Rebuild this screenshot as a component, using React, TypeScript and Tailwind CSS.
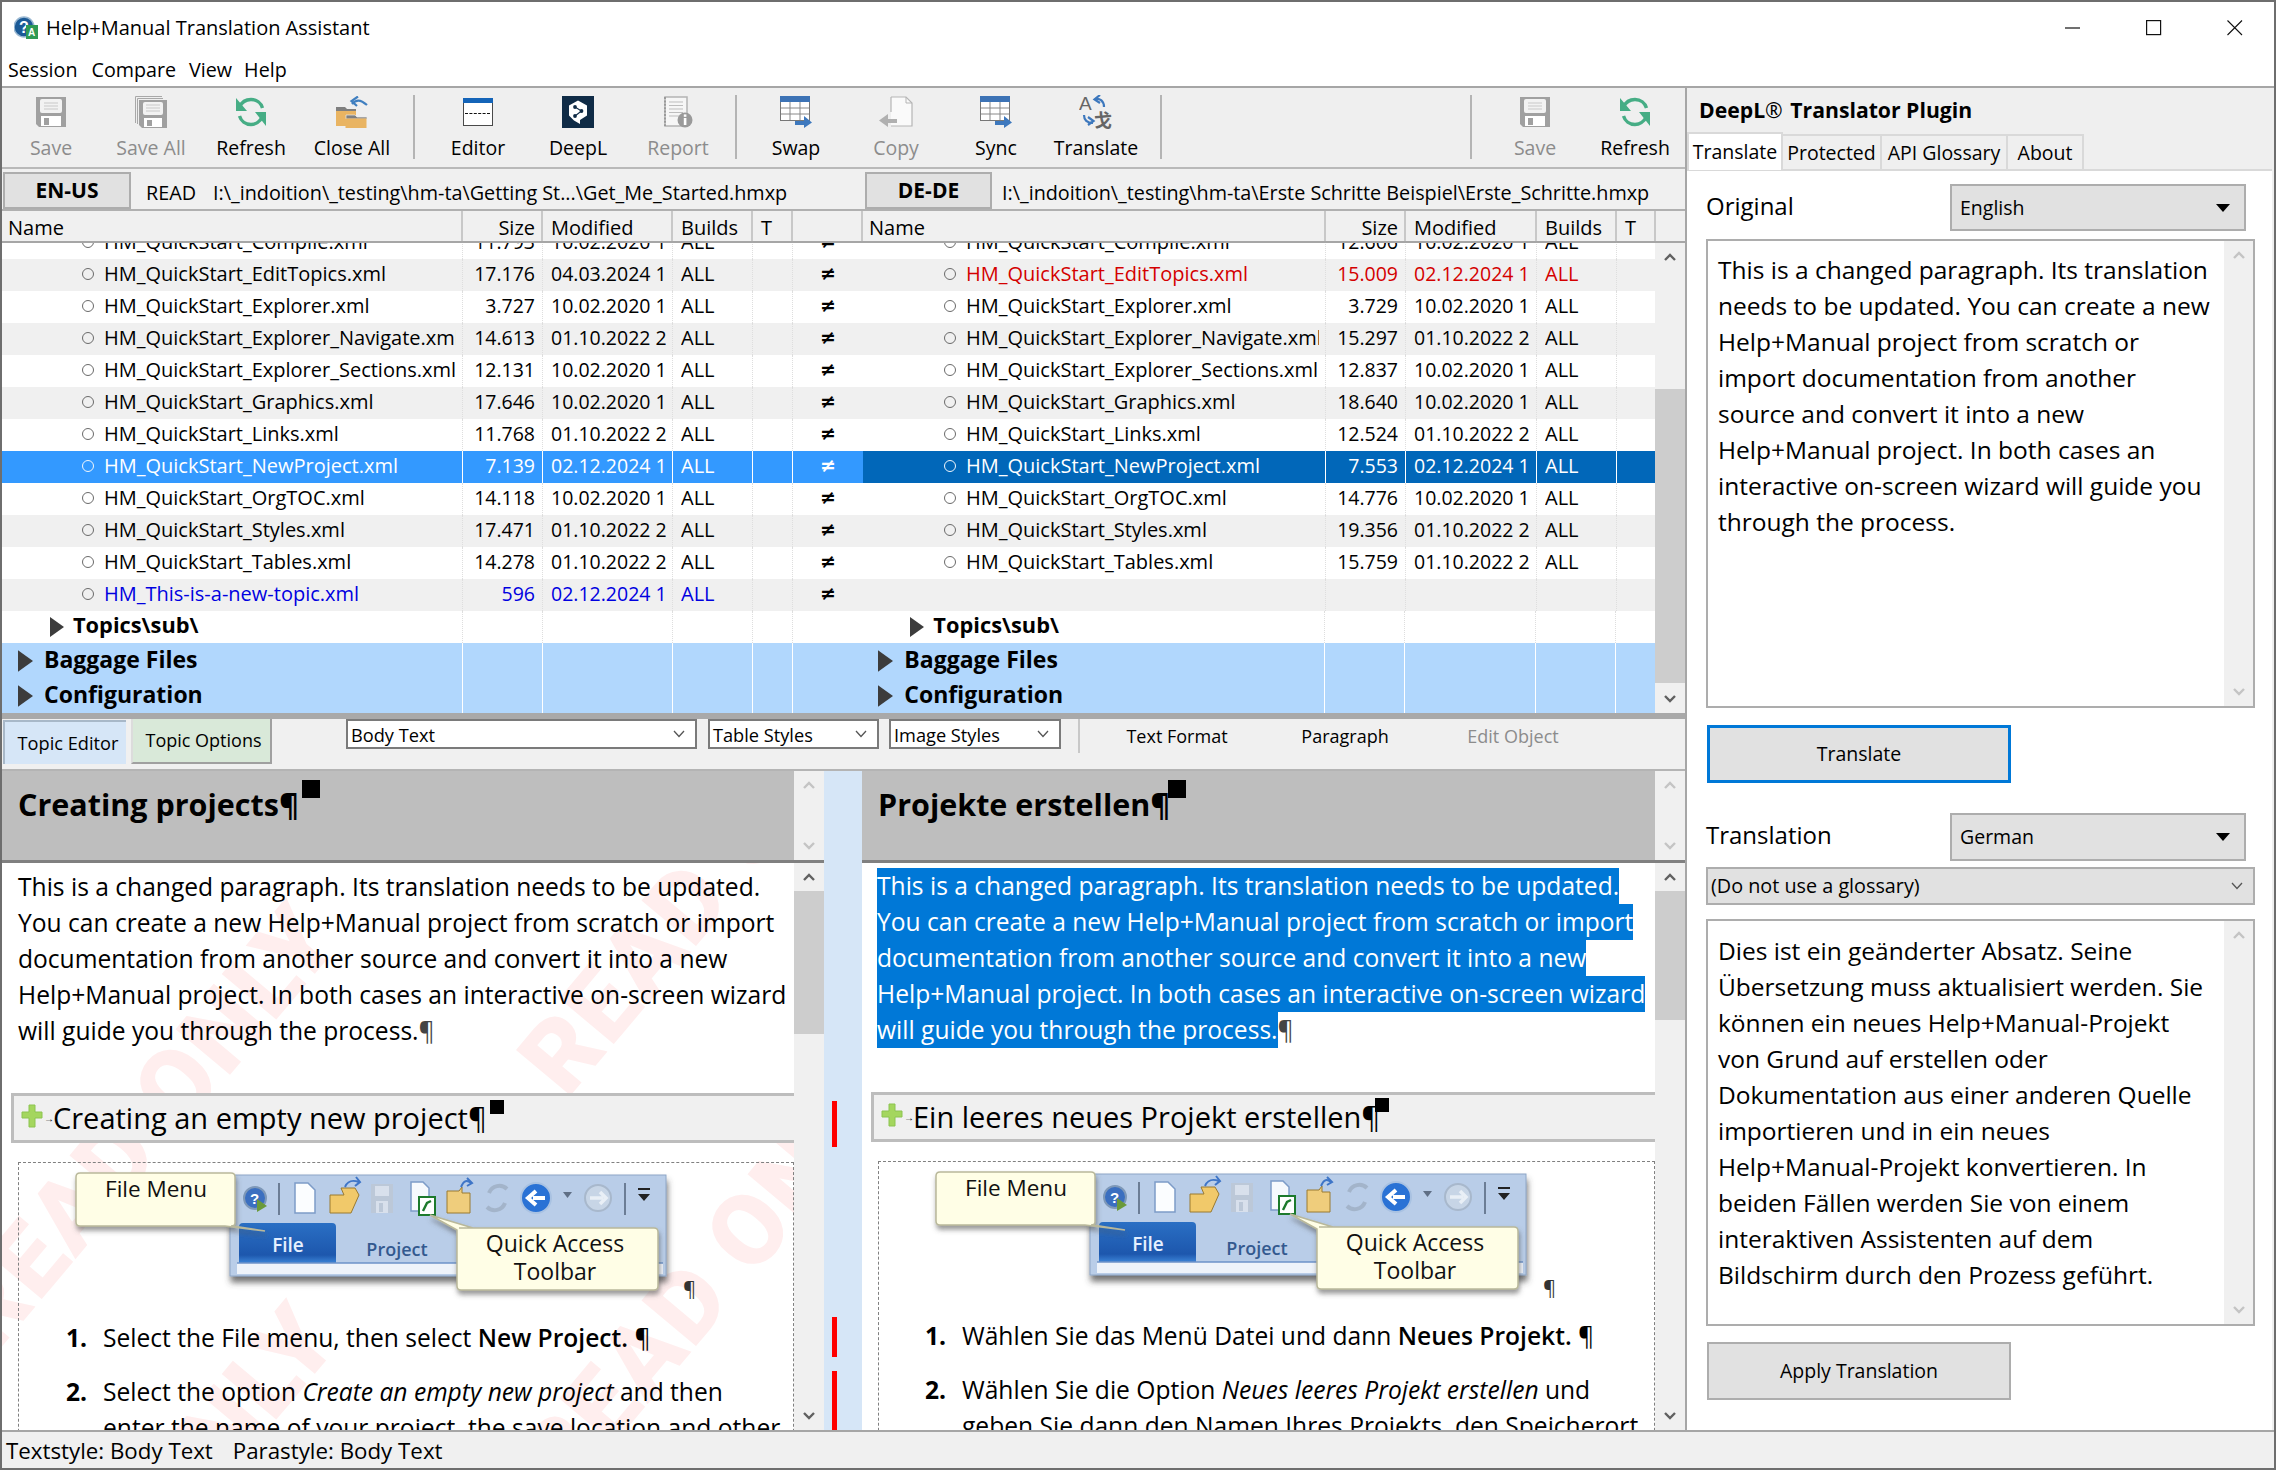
import React from "react";

const Chevron = ({ up, light }: { up?: boolean; light?: boolean }) => (
  <svg width="14" height="10" viewBox="0 0 14 10" fill="none">
    <path d={up ? "M2 8L7 3L12 8" : "M2 2L7 7L12 2"} stroke={light ? "#c4c4c4" : "#606060"} strokeWidth="2.4" />
  </svg>
);

const VScroll = ({ w, thumbTop, thumbH, light }: { w: string; thumbTop?: string; thumbH?: string; light?: boolean }) => (
  <div className={`${w} shrink-0 flex flex-col bg-[#f0f0f0]`}>
    <div className="h-[28px] shrink-0 flex items-center justify-center"><Chevron up light={light} /></div>
    <div className="flex-1 min-h-0 flex flex-col">
      {thumbTop && <div className={thumbTop} />}
      {thumbH && <div className={`${thumbH} bg-[#cdcdcd] shrink-0`} />}
    </div>
    <div className="h-[28px] shrink-0 flex items-center justify-center"><Chevron light={light} /></div>
  </div>
);

const SaveIcon = () => (
  <svg width="30" height="30" viewBox="0 0 30 30">
    <path d="M0 0H30V30H3L0 27Z" fill="#a0a0a0" />
    <rect x="4" y="2" width="22" height="14" rx="2" fill="#f2f2f2" />
    <path d="M8 6H22M8 9H22M8 12H22" stroke="#c8c8c8" />
    <rect x="5" y="19" width="20" height="10" fill="#fff" />
    <rect x="8" y="21" width="5" height="7" fill="#a0a0a0" />
  </svg>
);
const SaveAllIcon = () => (
  <svg width="32" height="32" viewBox="0 0 32 32">
    <path d="M.5 27V.5H27M2.5 28V2.5H28" stroke="#a8a8a8" fill="none" />
    <path d="M4 4H32V32H7L4 29Z" fill="#a0a0a0" />
    <rect x="8" y="6" width="20" height="13" rx="2" fill="#f2f2f2" />
    <path d="M11 9H25M11 12H25M11 15H25" stroke="#c8c8c8" />
    <rect x="9" y="22" width="18" height="9" fill="#fff" />
    <rect x="12" y="24" width="5" height="6" fill="#a0a0a0" />
  </svg>
);
const RefreshIcon = () => (
  <svg width="32" height="30" viewBox="0 0 32 30" fill="none">
    <path d="M4.5 10C7 4.5 12 2.5 16 2.5C21.5 2.5 26 6 27.5 11" stroke="#46ad85" strokeWidth="3.4" />
    <path d="M27.5 19.5C25 25 20 27.5 16 27.5C10.5 27.5 6 24 4.5 19" stroke="#46ad85" strokeWidth="3.4" />
    <path d="M1 1V14H12Z M31 29V15H20Z" fill="#46ad85" />
  </svg>
);
const CloseAllIcon = () => (
  <svg width="32" height="32" viewBox="0 0 32 32" fill="none">
    <path d="M16 8C20 3.5 24 3 31 9" stroke="#3f7fc0" strokeWidth="2.2" />
    <path d="M22 0.5L15.5 5L21 10" stroke="#3f7fc0" strokeWidth="2.2" />
    <path d="M0 11H9L11 13H20V15H0Z" fill="#7f7f7f" />
    <rect x="0" y="15" width="20" height="15" fill="#e9b462" />
    <path d="M10 19H19L21 21H31V23H10Z" fill="#7f7f7f" stroke="#efefef" strokeWidth=".7" />
    <rect x="10" y="23" width="20" height="9" fill="#e9b462" stroke="#e9b462" />
  </svg>
);
const EditorIcon = () => (
  <svg width="30" height="28" viewBox="0 0 30 28">
    <rect x=".5" y=".5" width="29" height="27" fill="#fff" stroke="#4a4a4a" />
    <rect x="0" y="0" width="30" height="5" fill="#1464b8" />
    <path d="M2 15.5H28" stroke="#111" strokeDasharray="3 1.4" />
  </svg>
);
const DeepLIcon = () => (
  <svg width="32" height="32" viewBox="0 0 32 32">
    <rect width="32" height="32" fill="#0f2b46" />
    <path d="M16 4.5L25 9.5V19.5L18 24V28L12 24.5L7 19.5V9.5Z" fill="#fff" />
    <circle cx="13" cy="11" r="1.9" fill="#0f2b46" />
    <circle cx="19.5" cy="15" r="1.9" fill="#0f2b46" />
    <circle cx="13" cy="20" r="1.9" fill="#0f2b46" />
    <path d="M13 11L19.5 15L13 20" stroke="#0f2b46" strokeWidth="1.1" fill="none" />
  </svg>
);
const ReportIcon = () => (
  <svg width="30" height="32" viewBox="0 0 30 32" fill="none">
    <path d="M2 1H24V30H2Z" fill="#f6f6f6" stroke="#b4b4b4" strokeWidth="1.5" />
    <path d="M6 6H20M6 9.5H20M6 13H20M6 16.5H20M6 20H16" stroke="#bdbdbd" />
    <path d="M2 1V30" stroke="#9a9a9a" strokeWidth="2" strokeDasharray="2 1.4" />
    <circle cx="22" cy="24" r="7.5" fill="#9a9a9a" />
    <rect x="20.8" y="22" width="2.6" height="7" fill="#fff" />
    <rect x="20.8" y="18.4" width="2.6" height="2.4" fill="#fff" />
  </svg>
);
const TableIcon = () => (
  <svg width="32" height="32" viewBox="0 0 32 32" fill="none">
    <rect x=".5" y=".5" width="29" height="24" fill="#fff" stroke="#777" />
    <rect x="0" y="0" width="30" height="6" fill="#3d73b5" />
    <path d="M10 6V24M20 6V24M1 12H29M1 18H29" stroke="#888" />
    <path d="M15 25H24V20L32 26.5L24 32V29H15Z" fill="#3d78bd" />
  </svg>
);
const CopyIcon = () => (
  <svg width="34" height="32" viewBox="0 0 34 32" fill="none">
    <path d="M12 1H27L33 7V30H12" fill="#fafafa" stroke="#b5b5b5" strokeWidth="1.2" />
    <path d="M12 1V16" stroke="#b5b5b5" strokeWidth="1.2" />
    <path d="M27 1V7H33" stroke="#b5b5b5" />
    <path d="M18 23H9V18L0 24.5L9 31V27H18Z" fill="#b0b0b0" />
  </svg>
);
const TranslateIcon = () => (
  <svg width="34" height="34" viewBox="0 0 34 34" fill="none">
    <text x="0" y="15" fontFamily="'Liberation Sans',sans-serif" fontSize="19" fill="#666">A</text>
    <text x="15" y="32" fontFamily="'Noto Sans CJK SC',sans-serif" fontWeight="700" fontSize="18" fill="#666">戈</text>
    <path d="M16 4C21 3 25 6 25 12" stroke="#3d78bd" strokeWidth="2.2" />
    <path d="M21 0L15.5 4.4L21 8" stroke="#3d78bd" strokeWidth="2.2" />
    <path d="M14 28C8 28 5 25 5 20" stroke="#3d78bd" strokeWidth="2.2" />
    <path d="M9 30L14.5 26L9 22" stroke="#3d78bd" strokeWidth="2.2" />
  </svg>
);

const AppIcon = () => (
  <svg width="26" height="26" viewBox="0 0 26 26">
    <circle cx="10" cy="12" r="10" fill="#1c5a96" stroke="#9ab8d2" strokeWidth="1.5" />
    <text x="5" y="18" fontFamily="'Liberation Sans',sans-serif" fontWeight="700" fontSize="16" fill="#fff">?</text>
    <rect x="12" y="10" width="12" height="14" fill="#2f9a54" />
    <text x="14" y="21" fontFamily="'Liberation Sans',sans-serif" fontWeight="700" fontSize="10" fill="#fff">A</text>
  </svg>
);

const ToolBtn = ({ icon, label, off, w = "w-[100px]" }: { icon: React.ReactNode; label: string; off?: boolean; w?: string }) => (
  <div className={`${w} shrink-0 flex flex-col items-center`}>
    <div className="h-[33px] flex items-center justify-center">{icon}</div>
    <div className={`mt-[7px] text-[19.5px] leading-[26px] ${off ? "text-[#8c8c8c]" : "text-black"}`}>{label}</div>
  </div>
);
const Sep = ({ cls }: { cls: string }) => <div className={`w-[2px] h-[64px] bg-[#b4b4b4] shrink-0 ${cls}`} />;

type Row = { n: string; s: string; m: string; rn?: string; rs?: string; rm?: string; kind?: string };
const rows: Row[] = [
  { n: "HM_QuickStart_Compile.xml", s: "11.793", m: "10.02.2020 1", rn: "HM_QuickStart_Compile.xml", rs: "12.606", rm: "10.02.2020 1" },
  { n: "HM_QuickStart_EditTopics.xml", s: "17.176", m: "04.03.2024 1", rn: "HM_QuickStart_EditTopics.xml", rs: "15.009", rm: "02.12.2024 1", kind: "red" },
  { n: "HM_QuickStart_Explorer.xml", s: "3.727", m: "10.02.2020 1", rn: "HM_QuickStart_Explorer.xml", rs: "3.729", rm: "10.02.2020 1" },
  { n: "HM_QuickStart_Explorer_Navigate.xml", s: "14.613", m: "01.10.2022 2", rn: "HM_QuickStart_Explorer_Navigate.xml", rs: "15.297", rm: "01.10.2022 2" },
  { n: "HM_QuickStart_Explorer_Sections.xml", s: "12.131", m: "10.02.2020 1", rn: "HM_QuickStart_Explorer_Sections.xml", rs: "12.837", rm: "10.02.2020 1" },
  { n: "HM_QuickStart_Graphics.xml", s: "17.646", m: "10.02.2020 1", rn: "HM_QuickStart_Graphics.xml", rs: "18.640", rm: "10.02.2020 1" },
  { n: "HM_QuickStart_Links.xml", s: "11.768", m: "01.10.2022 2", rn: "HM_QuickStart_Links.xml", rs: "12.524", rm: "01.10.2022 2" },
  { n: "HM_QuickStart_NewProject.xml", s: "7.139", m: "02.12.2024 1", rn: "HM_QuickStart_NewProject.xml", rs: "7.553", rm: "02.12.2024 1", kind: "sel" },
  { n: "HM_QuickStart_OrgTOC.xml", s: "14.118", m: "10.02.2020 1", rn: "HM_QuickStart_OrgTOC.xml", rs: "14.776", rm: "10.02.2020 1" },
  { n: "HM_QuickStart_Styles.xml", s: "17.471", m: "01.10.2022 2", rn: "HM_QuickStart_Styles.xml", rs: "19.356", rm: "01.10.2022 2" },
  { n: "HM_QuickStart_Tables.xml", s: "14.278", m: "01.10.2022 2", rn: "HM_QuickStart_Tables.xml", rs: "15.759", rm: "01.10.2022 2" },
  { n: "HM_This-is-a-new-topic.xml", s: "596", m: "02.12.2024 1", kind: "new" },
];

const Cell = ({ w, line, right, pad = "pl-[8px] pr-[8px]", children }: { w: string; line: string; right?: boolean; pad?: string; children?: React.ReactNode }) => (
  <div className={`${w} shrink-0 h-full border-r ${line} ${pad} ${right ? "text-right" : ""}`}>
    <div className="overflow-hidden whitespace-nowrap h-full">{children}</div>
  </div>
);

const Circle = ({ sel }: { sel?: boolean }) => (
  <span className={`inline-block w-[12px] h-[12px] rounded-full border-[1.5px] shrink-0 ${sel ? "border-[#f0f6fc]" : "border-[#6a6a6a]"}`} />
);
const Arrow = ({ big }: { big?: boolean }) => (
  <svg width={big ? 15 : 14} height={big ? 22 : 20} viewBox="0 0 14 20" className="shrink-0 mt-[3px]"><path d="M0 0L14 10L0 20Z" fill="#3c3c3c" /></svg>
);

const FileRow = ({ r, i }: { r: Row; i: number }) => {
  const grey = i % 2 === 1;
  const sel = r.kind === "sel";
  const base = sel ? "" : grey ? "bg-[#f0f0f0]" : "bg-white";
  const line = sel ? "border-white" : "border-dotted border-[#dedede]";
  const lTxt = sel ? "text-white bg-[#3399ff]" : r.kind === "new" ? "text-[#0000e0]" : "text-black";
  const rTxt = sel ? "text-white bg-[#0167b9]" : r.kind === "red" ? "text-[#d40000]" : "text-black";
  return (
    <div className={`flex h-[32px] leading-[29px] text-[20px] shrink-0 ${base}`}>
      <div className={`flex ${lTxt}`}>
        <Cell w="w-[461px]" line={line} pad="pl-[80px] pr-[6px]">
          <div className="flex items-center gap-[10px] h-[29px]"><Circle sel={sel} /><span>{r.n}</span></div>
        </Cell>
        <Cell w="w-[80px]" line={line} right pad="pl-[6px] pr-[7px]"><span className="text-[19.5px]">{r.s}</span></Cell>
        <Cell w="w-[130px]" line={line} pad="pl-[8px] pr-[6px]"><span className="text-[19.5px]">{r.m}</span></Cell>
        <Cell w="w-[80px]" line={line}>ALL</Cell>
        <Cell w="w-[40px]" line={line} />
        <div className={`w-[70px] text-center font-['DejaVu_Sans',sans-serif] font-bold text-[19px] ${sel ? "text-white" : "text-black"}`}>≠</div>
      </div>
      <div className={`flex ${rTxt}`}>
        <Cell w="w-[463px]" line={line} pad="pl-[81px] pr-[6px]">
          {r.rn && <div className="flex items-center gap-[10px] h-[29px]"><Circle sel={sel} /><span>{r.rn}</span></div>}
        </Cell>
        <Cell w="w-[80px]" line={line} right pad="pl-[6px] pr-[7px]"><span className="text-[19.5px]">{r.rs}</span></Cell>
        <Cell w="w-[131px]" line={line} pad="pl-[8px] pr-[7px]"><span className="text-[19.5px]">{r.rm}</span></Cell>
        <Cell w="w-[80px]" line={line}>{r.rn ? "ALL" : ""}</Cell>
        <div className="w-[39px]" />
      </div>
    </div>
  );
};

const GroupRow = ({ label, h, blue }: { label: string; h: string; blue?: boolean }) => {
  const line = blue ? "border-white" : "border-dotted border-[#dedede]";
  const ind = blue ? "pl-[16px]" : "pl-[48px]";
  const gap = blue ? "gap-[11px]" : "gap-[9px]";
  const size = blue ? "text-[23px]" : "text-[21.8px]";
  const Name = () => (
    <div className={`flex items-center ${gap} h-[calc(100%-3px)]`}><Arrow big={blue} /><span>{label}</span></div>
  );
  return (
    <div className={`flex ${h} shrink-0 font-bold ${size} ${blue ? "bg-[#b1d7fd]" : "bg-white"}`}>
      <Cell w="w-[461px]" line={line} pad={`${ind} pr-0`}><Name /></Cell>
      <Cell w="w-[80px]" line={line} /><Cell w="w-[130px]" line={line} /><Cell w="w-[80px]" line={line} /><Cell w="w-[40px]" line={line} />
      <div className="w-[70px]" />
      <Cell w="w-[463px]" line={line} pad={`${ind} pr-0`}><Name /></Cell>
      <Cell w="w-[80px]" line={line} /><Cell w="w-[131px]" line={line} /><Cell w="w-[80px]" line={line} />
      <div className="w-[39px]" />
    </div>
  );
};

const Head = ({ w, children, right, pad = "px-[8px]" }: { w: string; children?: React.ReactNode; right?: boolean; pad?: string }) => (
  <div className={`${w} shrink-0 border-r-2 border-[#c8c8c8] pt-[4px] leading-[26px] ${pad} ${right ? "text-right" : ""}`}>{children}</div>
);

const Picture = ({ id }: { id: string }) => (
  <svg width="640" height="145" viewBox="0 0 640 145" className="block">
    <defs>
      <filter id={`sh${id}`} x="-5%" y="-10%" width="110%" height="130%"><feDropShadow dx="1" dy="6" stdDeviation="3" floodColor="#444" floodOpacity=".75" /></filter>
      <filter id={`sk${id}`} x="-10%" y="-10%" width="120%" height="135%"><feDropShadow dx="1" dy="4" stdDeviation="2.5" floodColor="#555" floodOpacity=".6" /></filter>
      <linearGradient id={`ft${id}`} x1="0" y1="0" x2="0" y2="1"><stop offset="0" stopColor="#2a6fc4" /><stop offset=".8" stopColor="#1d57ad" /><stop offset="1" stopColor="#3b83d6" /></linearGradient>
    </defs>
    <rect x="165" y="10" width="436" height="101" fill="#b9cde8" stroke="#8ea6c6" filter={`url(#sh${id})`} />
    <rect x="172" y="98" width="426" height="11" fill="#eef3fa" />
    <path d="M174 98V62Q174 58 178 58H267Q271 58 271 62V98Z" fill={`url(#ft${id})`} />
    <path d="M172 98H598" stroke="#6d92c8" strokeWidth="1.5" />
    <text x="223" y="87" textAnchor="middle" fontFamily="'Open Sans',sans-serif" fontSize="19" fontWeight="600" fill="#e6f0ff">File</text>
    <text x="332" y="91" textAnchor="middle" fontFamily="'Open Sans',sans-serif" fontSize="18" fontWeight="600" fill="#33598f">Project</text>
    <circle cx="190" cy="33" r="11" fill="#3b6fc0" stroke="#7e98b8" strokeWidth="2" />
    <text x="185" y="39" fontFamily="'Liberation Sans',sans-serif" fontWeight="700" fontSize="15" fill="#fff">?</text>
    <path d="M192 34L202 41L192 47Z" fill="#6a9a3a" />
    <path d="M214 18V50M560 18V50" stroke="#596a80" strokeWidth="1.6" />
    <path d="M230 18H243L250 25V48H230Z" fill="#fbfdff" stroke="#7d9cc8" strokeWidth="1.5" />
    <path d="M265 30H279L276 23H290L294 30L286 48H265Z" fill="#f1c96a" stroke="#9a7a30" />
    <path d="M280 22C283 15 288 15 294 17M291 12L295 17L290 21" stroke="#3e75c7" strokeWidth="2" fill="none" />
    <path d="M306 19H328V48H306Z" fill="#bcc8d8" />
    <rect x="310" y="21" width="14" height="10" fill="#d8e0ec" /><rect x="311" y="36" width="12" height="12" fill="#d8e0ec" /><rect x="314" y="38" width="4" height="9" fill="#bcc8d8" />
    <path d="M346 17H358L364 23V46H346Z" fill="#f6f9fd" stroke="#7d9cc8" strokeWidth="1.5" />
    <rect x="354" y="32" width="16" height="18" fill="#fff" stroke="#1d7a2c" strokeWidth="2" />
    <path d="M358 46L362 38L366 36" stroke="#1d7a2c" strokeWidth="2.4" fill="none" />
    <path d="M382 26H394L397 22V28H405V48H382Z" fill="#efcd7c" stroke="#9a7a30" />
    <path d="M396 22C399 15 402 15 406 18M402 13L407 18L402 21" stroke="#3e75c7" strokeWidth="2" fill="none" />
    <path d="M424 28A11 11 0 0 1 442 24M440 38A11 11 0 0 1 422 42" stroke="#a3b4ca" strokeWidth="4" fill="none" />
    <circle cx="471" cy="33" r="15" fill="#2a72d5" stroke="#a9c2e2" strokeWidth="2" />
    <path d="M480 33H468M471 26L463 33L471 40" stroke="#fff" strokeWidth="4" fill="none" />
    <path d="M498 27H507L502.5 33Z" fill="#5f6f85" />
    <circle cx="533" cy="33" r="13" fill="#c7d5e6" stroke="#a8b8cc" strokeWidth="2" />
    <path d="M525 33H538M535 27L541 33L535 39" stroke="#e9eff6" strokeWidth="3.5" fill="none" />
    <path d="M573 23H585V25H573ZM573 29H585L579 36Z" fill="#222" />
    <path d="M11 12Q11 8 15 8H166Q170 8 170 12V58Q170 61 166 61H168L200 66L160 61H15Q11 61 11 57Z" fill="#fffee6" stroke="#b9b89a" strokeWidth="1.5" filter={`url(#sk${id})`} />
    <text x="91" y="32" textAnchor="middle" fontFamily="'Open Sans',sans-serif" fontSize="22.5" fill="#111">File Menu</text>
    <path d="M394 63H408L365 50L392 65V121Q392 125 396 125H589Q593 125 593 121V67Q593 63 589 63Z" fill="#fffee6" stroke="#b9b89a" strokeWidth="1.5" filter={`url(#sk${id})`} />
    <text x="490" y="87" textAnchor="middle" fontFamily="'Open Sans',sans-serif" fontSize="23" fill="#111">Quick Access</text>
    <text x="490" y="115" textAnchor="middle" fontFamily="'Open Sans',sans-serif" fontSize="23" fill="#111">Toolbar</text>
    <text x="618" y="131" fontFamily="'Open Sans',sans-serif" fontSize="20" fill="#333">¶</text>
  </svg>
);

const Plus = () => (
  <svg width="22" height="24" viewBox="0 0 22 24" className="shrink-0 -mt-[4px]">
    <path d="M8 1H14V8H21V14H14V23H8V14H1V8H8Z" fill="#a4d65e" stroke="#8cc450" />
  </svg>
);

const Tag = ({ cls }: { cls: string }) => <span className={`absolute bg-black ${cls}`} />;

const WM = ({ cls }: { cls: string }) => (
  <div className={`absolute font-['Roboto',sans-serif] font-black text-[100px] leading-none text-[#ffeeee] -rotate-[50deg] whitespace-nowrap tracking-[2px] origin-left ${cls}`}>READ ONLY</div>
);

const leftBody = [
  "This is a changed paragraph. Its translation needs to be updated.",
  "You can create a new Help+Manual project from scratch or import",
  "documentation from another source and convert it into a new",
  "Help+Manual project. In both cases an interactive on-screen wizard",
  "will guide you through the process.",
];

const origLines = [
  "This is a changed paragraph. Its translation",
  "needs to be updated. You can create a new",
  "Help+Manual project from scratch or",
  "import documentation from another",
  "source and convert it into a new",
  "Help+Manual project. In both cases an",
  "interactive on-screen wizard will guide you",
  "through the process.",
];
const transLines = [
  "Dies ist ein geänderter Absatz. Seine",
  "Übersetzung muss aktualisiert werden. Sie",
  "können ein neues Help+Manual-Projekt",
  "von Grund auf erstellen oder",
  "Dokumentation aus einer anderen Quelle",
  "importieren und in ein neues",
  "Help+Manual-Projekt konvertieren. In",
  "beiden Fällen werden Sie von einem",
  "interaktiven Assistenten auf dem",
  "Bildschirm durch den Prozess geführt.",
];

const Combo = ({ label, w }: { label: string; w: string }) => (
  <div className={`${w} h-[30px] shrink-0 bg-white border-2 border-[#7a7a7a] flex items-center justify-between pl-[3px] pr-[10px]`}>
    <span className="text-[18.2px] leading-none pt-[3px]">{label}</span>
    <svg width="12" height="8" viewBox="0 0 12 8" fill="none"><path d="M1 1L6 6.5L11 1" stroke="#555" strokeWidth="1.3" /></svg>
  </div>
);
const DarkArrow = () => (
  <svg width="14" height="8" viewBox="0 0 14 8"><path d="M0 0H14L7 8Z" fill="#000" /></svg>
);

export default function App() {
  return (
    <div className="w-[2276px] h-[1470px] overflow-hidden flex flex-col bg-white text-black border-t-2 border-l-2 border-r-2 border-b-2 border-[#6e6e6e] font-['Open_Sans',sans-serif]">
      {/* title */}
      <div className="h-[52px] shrink-0 flex items-center pl-[12px]">
        <AppIcon />
        <span className="ml-[6px] text-[20px] leading-none">Help+Manual Translation Assistant</span>
        <div className="ml-auto flex items-center">
          <svg width="16" height="16" className="mr-[65px]"><path d="M0 8H15" stroke="#111" strokeWidth="1.2" /></svg>
          <svg width="16" height="16" className="mr-[65px]"><rect x=".6" y=".6" width="14" height="14" fill="none" stroke="#111" strokeWidth="1.2" /></svg>
          <svg width="16" height="16" className="mr-[31px]"><path d="M.5 .5L15 15M15 .5L.5 15" stroke="#111" strokeWidth="1.1" /></svg>
        </div>
      </div>
      {/* menu */}
      <div className="h-[32px] shrink-0 flex items-center text-[19.7px] pl-[6px] leading-none">
        <span>Session</span><span className="ml-[14px]">Compare</span><span className="ml-[13px]">View</span><span className="ml-[12px]">Help</span>
      </div>
      <div className="h-[2px] shrink-0 bg-[#a6a6a6]" />

      <div className="flex flex-1 min-h-0">
        {/* left main */}
        <div className="w-[1683px] shrink-0 flex flex-col min-h-0">
          {/* toolbar */}
          <div className="h-[81px] shrink-0 bg-[#efefef] flex pt-[7px] border-b-2 border-[#b9b9b9]">
            <div className="w-[1px] shrink-0 -ml-[2px]" />
            <ToolBtn icon={<SaveIcon />} label="Save" off />
            <ToolBtn icon={<SaveAllIcon />} label="Save All" off />
            <ToolBtn icon={<RefreshIcon />} label="Refresh" />
            <ToolBtn icon={<CloseAllIcon />} label="Close All" w="w-[102px]" />
            <Sep cls="ml-[10px] mr-[13px]" />
            <ToolBtn icon={<EditorIcon />} label="Editor" />
            <ToolBtn icon={<DeepLIcon />} label="DeepL" />
            <ToolBtn icon={<ReportIcon />} label="Report" off />
            <Sep cls="ml-[7px] mr-[9px]" />
            <ToolBtn icon={<TableIcon />} label="Swap" />
            <ToolBtn icon={<CopyIcon />} label="Copy" off />
            <ToolBtn icon={<TableIcon />} label="Sync" />
            <ToolBtn icon={<TranslateIcon />} label="Translate" />
            <Sep cls="ml-[14px]" />
            <div className="flex-1" />
            <Sep cls="mr-[13px]" />
            <ToolBtn icon={<SaveIcon />} label="Save" off />
            <ToolBtn icon={<RefreshIcon />} label="Refresh" />
          </div>
          {/* lang row */}
          <div className="h-[42px] shrink-0 bg-[#f0f0f0] flex items-start text-[19.8px] border-b-2 border-[#b0b0b0]">
            <div className="w-[860px] shrink-0 flex items-start">
              <div className="ml-[1px] mt-[3px] w-[128px] h-[37px] bg-[#e1e1e1] border-2 border-[#adadad] flex items-center justify-center font-bold text-[21px]">EN-US</div>
              <span className="ml-[15px] mt-[8px] leading-[32px]">READ</span>
              <span className="ml-[17px] mt-[8px] leading-[32px] whitespace-nowrap">I:\_indoition\_testing\hm-ta\Getting St...\Get_Me_Started.hmxp</span>
            </div>
            <div className="ml-[3px] mt-[3px] w-[127px] h-[37px] bg-[#e1e1e1] border-2 border-[#adadad] flex items-center justify-center font-bold text-[21px]">DE-DE</div>
            <span className="ml-[10px] mt-[8px] leading-[32px] whitespace-nowrap">I:\_indoition\_testing\hm-ta\Erste Schritte Beispiel\Erste_Schritte.hmxp</span>
          </div>
          {/* header */}
          <div className="h-[32px] shrink-0 flex bg-[#f0f0f0] text-[20px] border-b-2 border-[#a6a6a6]">
            <Head w="w-[461px]" pad="px-[6px]">Name</Head>
            <Head w="w-[80px]" right pad="px-[6px]">Size</Head>
            <Head w="w-[130px]">Modified</Head>
            <Head w="w-[80px]">Builds</Head>
            <Head w="w-[40px]">T</Head>
            <Head w="w-[70px]" />
            <Head w="w-[463px]" pad="px-[6px]">Name</Head>
            <Head w="w-[80px]" right pad="px-[6px]">Size</Head>
            <Head w="w-[131px]">Modified</Head>
            <Head w="w-[80px]">Builds</Head>
            <Head w="w-[39px]">T</Head>
          </div>
          {/* list */}
          <div className="h-[470px] shrink-0 flex overflow-hidden">
            <div className="w-[1653px] shrink-0 flex flex-col overflow-hidden">
              <div className="-mt-[16px] flex flex-col">
                {rows.map((r, i) => <FileRow key={i} r={r} i={i} />)}
                <GroupRow label={"Topics\\sub\\"} h="h-[32px]" />
                <GroupRow label="Baggage Files" h="h-[35px]" blue />
                <GroupRow label="Configuration" h="h-[35px]" blue />
              </div>
            </div>
            <VScroll w="w-[30px]" thumbTop="h-[118px]" thumbH="h-[294px]" />
          </div>
          <div className="h-[6px] shrink-0 bg-[#a9a9a9]" />
          {/* editor toolbar */}
          <div className="h-[52px] shrink-0 bg-[#f0f0f0] flex items-start border-b-2 border-[#b4b4b4]">
            <div className="w-[123px] h-[44px] mt-[1px] ml-[1px] bg-[#d6e6f7] border-l-2 border-t-2 border-[#a8b8c8] flex items-center justify-center text-[18.2px] pt-[2px] pl-[5px]">Topic Editor</div>
            <div className="w-[141px] h-[45px] ml-[5px] bg-[#d9e9d9] border-2 border-[#a0a0a0] border-t-0 border-l-[#dcdcdc] flex items-center justify-center text-[18px] pl-[4px]">Topic Options</div>
            <div className="w-[74px] shrink-0" />
            <Combo label="Body Text" w="w-[351px]" />
            <div className="w-[11px] shrink-0" />
            <Combo label="Table Styles" w="w-[171px]" />
            <div className="w-[10px] shrink-0" />
            <Combo label="Image Styles" w="w-[172px]" />
            <div className="w-[2px] h-[34px] bg-[#c8c8c8] ml-[17px] shrink-0" />
            <div className="w-[194px] text-center text-[18px] leading-[34px] shrink-0">Text Format</div>
            <div className="w-[142px] text-center text-[18px] leading-[34px] shrink-0">Paragraph</div>
            <div className="w-[194px] text-center text-[18px] leading-[34px] shrink-0 text-[#8c8c8c]">Edit Object</div>
          </div>
          {/* editor panes */}
          <div className="flex-1 min-h-0 flex">
            {/* left pane */}
            <div className="w-[822px] shrink-0 flex flex-col">
              <div className="h-[92px] shrink-0 flex border-b-[3px] border-[#808080]">
                <div className="flex-1 bg-[#bebebe] relative pl-[16px] pt-[13px] text-[30.5px] font-bold leading-[40px] whitespace-nowrap">
                  Creating projects¶<Tag cls="left-[300px] top-[9px] w-[18px] h-[18px]" />
                </div>
                <VScroll w="w-[30px]" light />
              </div>
              <div className="flex-1 min-h-0 flex">
                <div className="flex-1 min-w-0 relative overflow-hidden bg-white">
                  <WM cls="left-[539px] top-[165px]" />
                  <WM cls="left-[-33px] top-[420px]" />
                  <WM cls="left-[539px] top-[565px]" />
                  <WM cls="left-[-33px] top-[820px]" />
                  <div className="relative pl-[16px] pt-[6px] text-[24.6px] leading-[36px] whitespace-nowrap">
                    {leftBody.map((t, i) => <div key={i}>{t}{i === 4 && <span className="text-[#444]">¶</span>}</div>)}
                  </div>
                  <div className="relative ml-[9px] mt-[44px] h-[50px] bg-[#f0f0f0] border-[3px] border-r-0 border-[#bdbdbd] flex items-center pl-[7px] text-[29px] whitespace-nowrap">
                    <Plus /><span className="text-[10px] mx-[1px] w-[8px]">→</span><span className="-mt-[1px]">Creating an empty new project¶</span>
                    <Tag cls="left-[476px] top-[4px] w-[14px] h-[14px]" />
                  </div>
                  <div className="relative ml-[16px] mt-[19px] border-t border-l border-r border-dashed border-[#808080] h-[300px] text-[24.6px] whitespace-nowrap">
                    <div className="pl-[46px] pt-[2px] h-[147px]"><Picture id="a" /></div>
                    <div className="flex mt-[10px] leading-[36px]">
                      <span className="w-[84px] text-right pr-[16px] font-bold shrink-0">1.</span>
                      <span>Select the File menu, then select <b className="font-semibold">New Project.</b> ¶</span>
                    </div>
                    <div className="flex mt-[18px] leading-[36px]">
                      <span className="w-[84px] text-right pr-[16px] font-bold shrink-0">2.</span>
                      <span>Select the option <i>Create an empty new project</i> and then<br />enter the name of your project, the save location and other</span>
                    </div>
                  </div>
                </div>
                <VScroll w="w-[30px]" thumbTop="h-0" thumbH="h-[143px]" />
              </div>
            </div>
            {/* gutter */}
            <div className="w-[38px] shrink-0 bg-[#d6e6f7] relative">
              <div className="absolute left-[8px] top-[330px] w-[5px] h-[46px] bg-[#f00]" />
              <div className="absolute left-[8px] top-[546px] w-[5px] h-[40px] bg-[#f00]" />
              <div className="absolute left-[8px] top-[600px] w-[5px] h-[59px] bg-[#f00]" />
            </div>
            {/* right pane */}
            <div className="flex-1 min-w-0 flex flex-col">
              <div className="h-[92px] shrink-0 flex border-b-[3px] border-[#808080]">
                <div className="w-[793px] bg-[#bebebe] relative pl-[16px] pt-[13px] text-[30.5px] font-bold leading-[40px] whitespace-nowrap">
                  Projekte erstellen¶<Tag cls="left-[306px] top-[9px] w-[18px] h-[18px]" />
                </div>
                <VScroll w="flex-1" light />
              </div>
              <div className="flex-1 min-h-0 flex">
                <div className="w-[793px] shrink-0 relative overflow-hidden bg-white">
                  <div className="pl-[15px] pt-[5px] text-[24.6px] leading-[36px] whitespace-nowrap">
                    {leftBody.map((t, i) => (
                      <div key={i} className="h-[36px]"><span className="inline-block h-[36px] bg-[#0078d7] text-white">{t}</span>{i === 4 && <span className="text-[#444]">¶</span>}</div>
                    ))}
                  </div>
                  <div className="relative ml-[9px] mt-[44px] h-[50px] bg-[#f0f0f0] border-[3px] border-r-0 border-[#bdbdbd] flex items-center pl-[7px] text-[29px] whitespace-nowrap">
                    <Plus /><span className="text-[10px] mx-[1px] w-[8px]">→</span><span>Ein leeres neues Projekt erstellen¶</span>
                    <Tag cls="left-[501px] top-[3px] w-[14px] h-[14px]" />
                  </div>
                  <div className="relative ml-[16px] mt-[19px] border-t border-l border-r border-dashed border-[#808080] h-[300px] text-[24.6px] whitespace-nowrap">
                    <div className="pl-[46px] pt-[2px] h-[147px]"><Picture id="b" /></div>
                    <div className="flex mt-[9px] leading-[36px]">
                      <span className="w-[83px] text-right pr-[16px] font-bold shrink-0">1.</span>
                      <span>Wählen Sie das Menü Datei und dann <b className="font-semibold">Neues Projekt.</b> ¶</span>
                    </div>
                    <div className="flex mt-[18px] leading-[36px]">
                      <span className="w-[83px] text-right pr-[16px] font-bold shrink-0">2.</span>
                      <span>Wählen Sie die Option <i>Neues leeres Projekt erstellen</i> und<br />geben Sie dann den Namen Ihres Projekts, den Speicherort</span>
                    </div>
                  </div>
                </div>
                <VScroll w="flex-1" thumbTop="h-0" thumbH="h-[129px]" />
              </div>
            </div>
          </div>
        </div>
        {/* splitter */}
        <div className="w-[2px] shrink-0 bg-[#a6a6a6]" />
        {/* plugin */}
        <div className="flex-1 min-w-0 bg-[#efefef] flex flex-col">
          <div className="h-[42px] shrink-0 pl-[12px] pt-[8px] text-[21.2px] font-bold leading-[28px] whitespace-nowrap">DeepL<span className="font-normal">®</span> <span className="ml-[2px]">Translator Plugin</span></div>
          <div className="h-[39px] shrink-0 flex items-end text-[19.5px]">
            <div className="w-[96px] h-[38px] bg-white border-t-2 border-r-2 border-l-2 border-[#d9d9d9] flex items-center justify-center relative top-[1px]">Translate</div>
            <div className="w-[99px] h-[35px] border-t-2 border-r-2 border-[#d9d9d9] flex items-center justify-center">Protected</div>
            <div className="w-[126px] h-[35px] border-t-2 border-r-2 border-[#d9d9d9] flex items-center justify-center">API Glossary</div>
            <div className="w-[76px] h-[35px] border-t-2 border-r-2 border-[#d9d9d9] flex items-center justify-center">About</div>
          </div>
          <div className="flex-1 min-h-0 bg-white border-t-2 border-[#d9d9d9] mr-[2px] flex flex-col pl-[19px] pr-[17px] pb-[32px]">
            <div className="mt-[13px] flex items-center h-[47px] shrink-0">
              <span className="w-[244px] text-[24px] -mt-[3px]">Original</span>
              <div className="w-[296px] h-[47px] bg-[#e1e1e1] border-2 border-[#adadad] flex items-center justify-between pl-[8px] pr-[14px] text-[19.5px]">English<DarkArrow /></div>
            </div>
            <div className="mt-[8px] h-[469px] shrink-0 border-2 border-[#adadad] flex">
              <div className="flex-1 pl-[10px] pt-[11px] text-[24.5px] leading-[36px] whitespace-nowrap overflow-hidden">
                {origLines.map((t) => <div key={t}>{t}</div>)}
              </div>
              <VScroll w="w-[29px]" light />
            </div>
            <div className="mt-[17px] ml-[1px] w-[304px] h-[58px] shrink-0 bg-[#e1e1e1] border-[3px] border-[#0078d7] flex items-center justify-center text-[19.5px]">Translate</div>
            <div className="mt-[30px] flex items-center h-[48px] shrink-0">
              <span className="w-[244px] text-[24px] -mt-[4px]">Translation</span>
              <div className="w-[296px] h-[48px] bg-[#e1e1e1] border-2 border-[#adadad] flex items-center justify-between pl-[8px] pr-[14px] text-[19.5px]">German<DarkArrow /></div>
            </div>
            <div className="mt-[6px] h-[38px] shrink-0 bg-[#e1e1e1] border-2 border-[#adadad] flex items-center justify-between pl-[3px] pr-[10px] text-[19.8px]">
              (Do not use a glossary)
              <svg width="12" height="8" viewBox="0 0 12 8" fill="none"><path d="M1 1L6 6.5L11 1" stroke="#555" strokeWidth="1.3" /></svg>
            </div>
            <div className="mt-[14px] h-[407px] shrink-0 border-2 border-[#adadad] flex">
              <div className="flex-1 pl-[10px] pt-[12px] text-[24.5px] leading-[36px] whitespace-nowrap overflow-hidden">
                {transLines.map((t) => <div key={t}>{t}</div>)}
              </div>
              <VScroll w="w-[29px]" light />
            </div>
            <div className="mt-[16px] ml-[1px] w-[304px] h-[58px] shrink-0 bg-[#e1e1e1] border-2 border-[#adadad] flex items-center justify-center text-[19.5px]">Apply Translation</div>
          </div>
        </div>
      </div>
      {/* status */}
      <div className="h-[38px] shrink-0 bg-[#f0f0f0] border-t-2 border-[#a6a6a6] flex items-center pl-[4px] pt-[2px] text-[22.3px] whitespace-nowrap">
        <span>Textstyle: Body Text</span><span className="ml-[20px]">Parastyle: Body Text</span>
      </div>
    </div>
  );
}
